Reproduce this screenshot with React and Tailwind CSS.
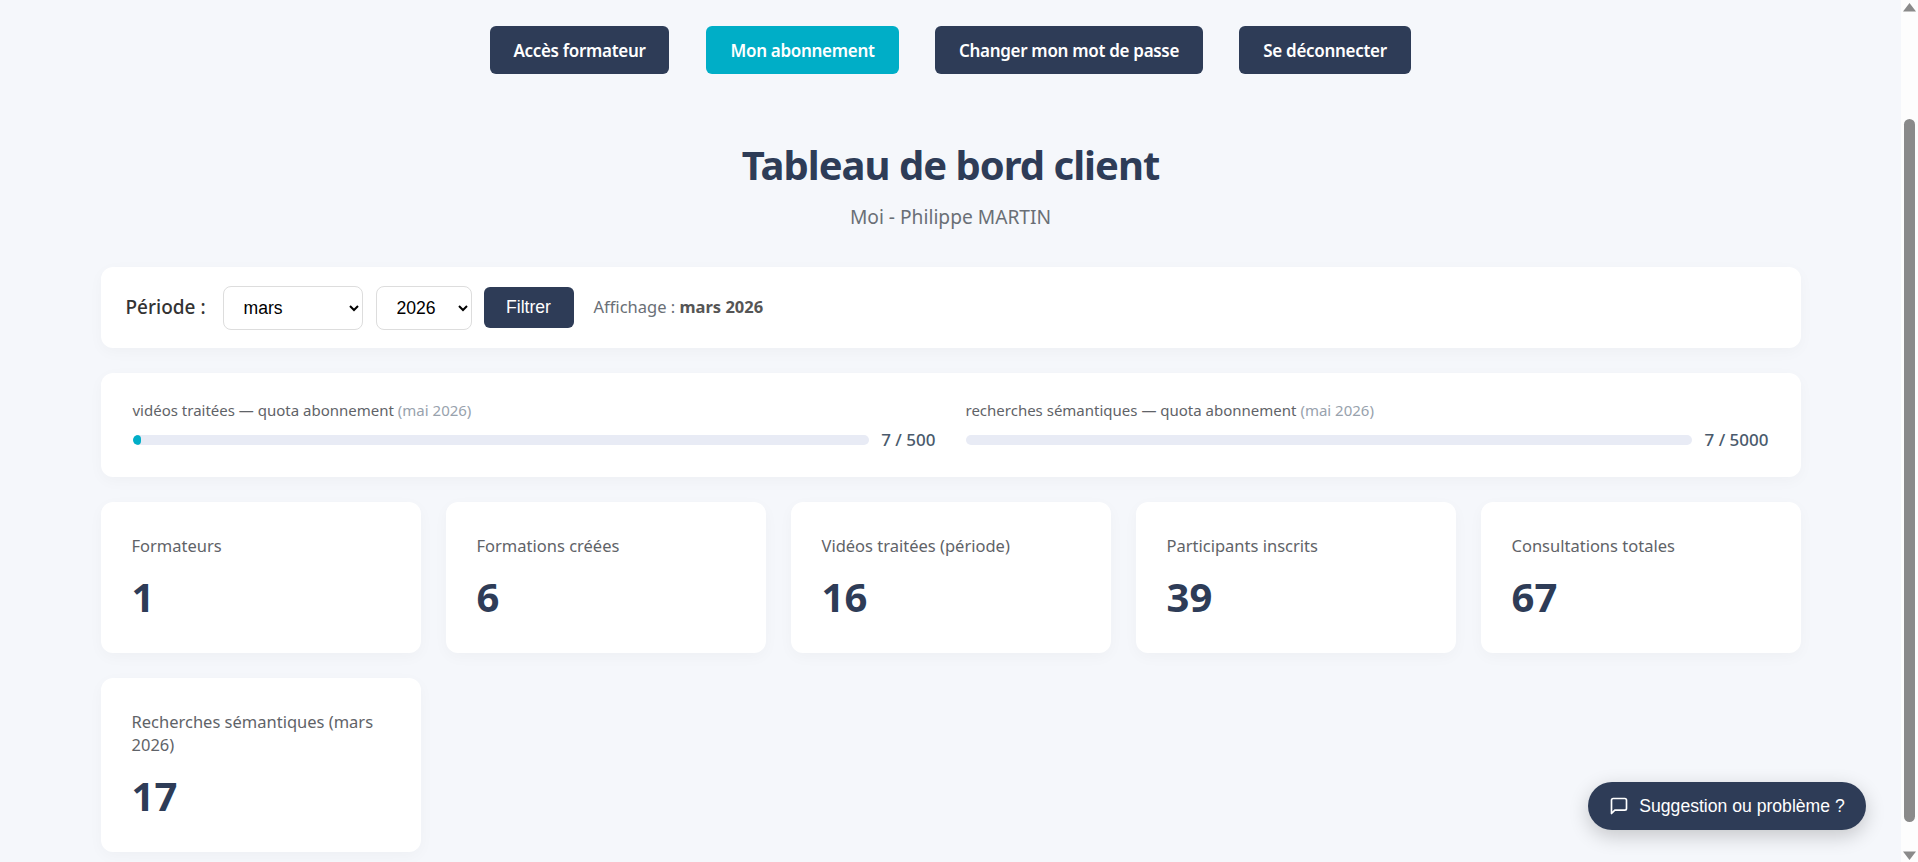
const seg = "font-['Noto_Sans',sans-serif]";
const arial = "font-['Liberation_Sans',Arial,sans-serif]";

function NavBtn({ children, active, width }) {
  return (
    <button className={`h-12 pt-[1px] ${width} rounded-md text-[17px] font-semibold text-white tracking-[-0.3px] ${active ? "bg-[#00aec7]" : "bg-[#2e3c57]"}`}>
      {children}
    </button>
  );
}

function Quota({ label, value, fill }) {
  return (
    <div className="flex-1">
      <div className="text-[15px] leading-[20px] text-[#5f6368] mb-[9px]">
        {label} <span className="text-[#98a2ad]">(mai 2026)</span>
      </div>
      <div className="flex items-center gap-3">
        <div className="flex-1 h-[10px] rounded-full bg-[#e8ebf5] overflow-hidden">
          {fill ? <div className="h-full w-[8px] rounded-full bg-[#00aec7]" /> : null}
        </div>
        <div className="text-[17px] leading-[22px] font-medium text-[#4a5a6c]">{value}</div>
      </div>
    </div>
  );
}

function Stat({ label, value }) {
  return (
    <div className="bg-white rounded-xl shadow-[0_4px_15px_rgba(0,0,0,0.03)] px-[31px] pt-[32px] pb-[26px]">
      <div className="text-[16.5px] leading-[23px] text-[#5f6368] mb-[10px]">{label}</div>
      <div className="text-[40px] leading-[60px] font-bold text-[#2e3c57]">{value}</div>
    </div>
  );
}

export default function App() {
  return (
    <div className={`relative flex h-[862px] overflow-hidden bg-[#f5f7fb] ${seg}`}>
      <main className="flex-1 min-w-0 pt-[26px]">
        <nav className="flex justify-center gap-9">
          <NavBtn width="w-[179px] mr-[1px]">Accès formateur</NavBtn>
          <NavBtn width="w-[193px]" active>Mon abonnement</NavBtn>
          <NavBtn width="w-[268px]">Changer mon mot de passe</NavBtn>
          <NavBtn width="w-[172px]">Se déconnecter</NavBtn>
        </nav>
        <header className="text-center mt-[61px]">
          <h1 className="text-[40px] leading-[60px] font-bold text-[#2e3c57] tracking-[-1px]">Tableau de bord client</h1>
          <p className="text-[19.2px] leading-[28px] mt-[8px] text-[#6a6f76]">Moi - Philippe MARTIN</p>
        </header>
        <div className="w-[1700px] mx-auto mt-[36px] flex flex-col gap-[25px]">
          <section className="bg-white rounded-xl shadow-[0_4px_15px_rgba(0,0,0,0.03)] h-[81px] px-[25px] flex items-center">
            <span className="text-[19px] font-medium text-[#333] w-[97px]">Période :</span>
            <select className={`${arial} w-[140px] h-[44px] pl-[16px] pr-[8px] text-[17.6px] text-black bg-white border border-[#ddd] rounded-lg mr-[13px]`} defaultValue="mars">
              <option>mars</option>
            </select>
            <select className={`${arial} w-[96px] h-[44px] pl-[16px] pr-[4px] text-[17.6px] text-black bg-white border border-[#ddd] rounded-lg mr-[12px]`} defaultValue="2026">
              <option>2026</option>
            </select>
            <button className={`${arial} w-[90px] h-[41px] rounded-md bg-[#2e3c57] text-white text-[17.6px]`}>Filtrer</button>
            <span className="ml-[20px] text-[16.5px] text-[#6a6f76]">Affichage : <strong className="font-bold text-[#555]">mars 2026</strong></span>
          </section>
          <section className="bg-white rounded-xl shadow-[0_4px_15px_rgba(0,0,0,0.03)] h-[104px] px-8 pt-[27px] flex gap-[30px]">
            <Quota label="vidéos traitées — quota abonnement" value="7 / 500" fill />
            <Quota label="recherches sémantiques — quota abonnement" value="7 / 5000" />
          </section>
          <section className="grid grid-cols-5 gap-[25px] items-start">
            <Stat label="Formateurs" value="1" />
            <Stat label="Formations créées" value="6" />
            <Stat label="Vidéos traitées (période)" value="16" />
            <Stat label="Participants inscrits" value="39" />
            <Stat label="Consultations totales" value="67" />
            <Stat label="Recherches sémantiques (mars 2026)" value="17" />
          </section>
        </div>
      </main>
      <aside className="w-[17px] shrink-0 bg-[#fdfdfd] flex flex-col items-center">
        <svg width="13" height="9" viewBox="0 0 13 9" className="mt-[3px] fill-[#8a8a8a]"><path d="M6.5 0 13 8.5H0z" /></svg>
        <div className="w-[11px] h-[703px] rounded-full bg-[#8a8a8a] mt-[107px]" />
        <svg width="13" height="9" viewBox="0 0 13 9" className="mt-[29px] fill-[#8a8a8a]"><path d="M6.5 9 13 .5H0z" /></svg>
      </aside>
      <button className={`${arial} absolute right-[52px] bottom-[32px] h-12 w-[278px] rounded-full bg-[#2e3c57] text-white text-[17.6px] flex items-center justify-center gap-[10px] shadow-[0_6px_20px_rgba(0,0,0,0.2)]`}>
        <svg width="20" height="20" viewBox="0 0 24 24" fill="none" stroke="currentColor" strokeWidth="2" strokeLinecap="round" strokeLinejoin="round">
          <path d="M21 15a2 2 0 0 1-2 2H7l-4 4V5a2 2 0 0 1 2-2h14a2 2 0 0 1 2 2z" />
        </svg>
        Suggestion ou problème ?
      </button>
    </div>
  );
}
